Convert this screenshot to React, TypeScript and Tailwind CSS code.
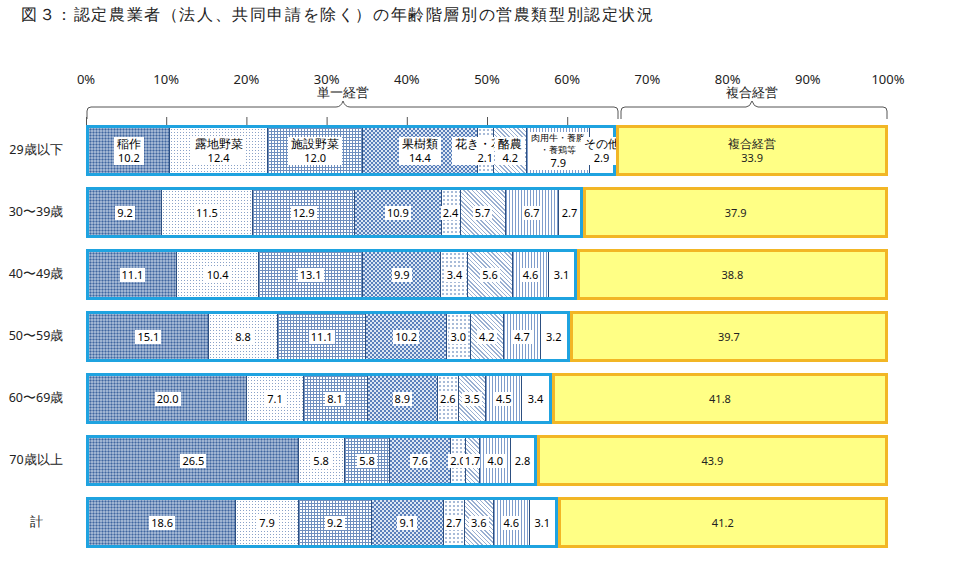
const rows = [
  { label: '29歳以下', v: [10.2, 12.4, 12.0, 14.4, 2.1, 4.2, 7.9, 2.9], c: 33.9 },
  { label: '30〜39歳', v: [9.2, 11.5, 12.9, 10.9, 2.4, 5.7, 6.7, 2.7], c: 37.9 },
  { label: '40〜49歳', v: [11.1, 10.4, 13.1, 9.9, 3.4, 5.6, 4.6, 3.1], c: 38.8 },
  { label: '50〜59歳', v: [15.1, 8.8, 11.1, 10.2, 3.0, 4.2, 4.7, 3.2], c: 39.7 },
  { label: '60〜69歳', v: [20.0, 7.1, 8.1, 8.9, 2.6, 3.5, 4.5, 3.4], c: 41.8 },
  { label: '70歳以上', v: [26.5, 5.8, 5.8, 7.6, 2.0, 1.7, 4.0, 2.8], c: 43.9 },
  { label: '計', v: [18.6, 7.9, 9.2, 9.1, 2.7, 3.6, 4.6, 3.1], c: 41.2 },
]

const names = ['稲作', '露地野菜', '施設野菜', '果樹類', '花き・花木', '酪農', '肉用牛・養豚・養鶏等', 'その他']

const patterns = [
  'bg-[#9fb4d2] bg-[radial-gradient(circle,#3f66a0_0.9px,transparent_1.1px)] bg-[length:3px_3px]',
  'bg-white bg-[radial-gradient(circle,#8aa2c8_0.7px,transparent_0.9px)] bg-[length:3px_3px]',
  'bg-white bg-[linear-gradient(#6f8fbf_1px,transparent_1px),linear-gradient(90deg,#6f8fbf_1px,transparent_1px)] bg-[length:3px_3px]',
  'bg-[#dce6f3] bg-[conic-gradient(#5a80bb_25%,transparent_0_50%,#5a80bb_0_75%,transparent_0)] bg-[length:4px_4px]',
  'bg-white bg-[radial-gradient(circle,#a9bcd8_0.8px,transparent_1px)] bg-[length:4px_4px]',
  'bg-white bg-[repeating-linear-gradient(45deg,#9ab0d2_0_1px,transparent_1px_3px)]',
  'bg-white bg-[repeating-linear-gradient(90deg,#7f9dcc_0_1px,transparent_1px_3px)]',
  'bg-white',
]

function Seg({ w, val, i, first }: { w: number; val: number; i: number; first: boolean }) {
  return (
    <div
      className={`h-full flex items-center justify-center border-r border-[#2d4f80] last:border-r-0 ${patterns[i]}`}
      style={{ width: `${w}%` }}
    >
      {first ? (
        <div className="bg-white px-[3px] text-center leading-[14px] text-[11px] text-black whitespace-nowrap">
          {i === 6 ? (
            <>
              <div className="text-[9px] leading-[12px]">肉用牛・養豚</div>
              <div className="text-[9px] leading-[12px]">・養鶏等</div>
            </>
          ) : (
            <div className="text-[11.5px]">{names[i]}</div>
          )}
          <div>{val.toFixed(1)}</div>
        </div>
      ) : (
        <div className="bg-white px-[2px] text-[11px] leading-[14px] text-black whitespace-nowrap">{val.toFixed(1)}</div>
      )}
    </div>
  )
}

export default function App() {
  return (
    <div className="w-[960px] h-[586px] bg-white font-['Noto_Sans_CJK_JP',sans-serif] text-[#222] relative overflow-hidden">
      <div className="pl-[21px] pt-[3px] text-[15.5px] tracking-[1.6px]">
        図３：認定農業者（法人、共同申請を除く）の年齢階層別の営農類型別認定状況
      </div>

      <div className="flex mt-[44px]">
        <div className="w-[86px]" />
        <div className="w-[802px] relative h-[55px]">
          {[0, 10, 20, 30, 40, 50, 60, 70, 80, 90, 100].map(p => (
            <div
              key={p}
              className="absolute top-0 -translate-x-1/2 text-[13px] font-['Liberation_Sans',sans-serif]"
              style={{ left: `${p}%` }}
            >
              {p}%
            </div>
          ))}
          <svg className="absolute left-0 top-[23px]" width="802" height="32" viewBox="0 0 802 32">
            <path d="M1 26 V18 Q1 14 5 14 H250 Q255 14 257 8 Q259 14 264 14 H528 Q532 14 532 18 V26" fill="none" stroke="#555" strokeWidth="1" />
            <path d="M535 26 V18 Q535 14 539 14 H660 Q664 14 666 8 Q668 14 672 14 H797 Q801 14 801 18 V26" fill="none" stroke="#555" strokeWidth="1" />
            {[0, 80.2, 160.4, 240.6, 320.8, 401, 481.2].map(x => (
              <line key={x} x1={x + 0.5} y1="24" x2={x + 0.5} y2="32" stroke="#555" />
            ))}
          </svg>
          <div className="absolute left-[257px] -translate-x-1/2 top-[15px] text-[12.5px] leading-[16px]">単一経営</div>
          <div className="absolute left-[666px] -translate-x-1/2 top-[15px] text-[12.5px] leading-[16px]">複合経営</div>
        </div>
      </div>

      <div className="flex flex-col gap-[11px]">
        {rows.map((r, ri) => {
          const single = r.v.reduce((a, b) => a + b, 0)
          return (
            <div key={r.label} className="flex items-center h-[51px]">
              <div className="w-[86px] pr-[14px] text-center text-[12.5px]">{r.label}</div>
              <div className="w-[802px] h-full flex">
                <div
                  className="h-full flex border-[3px] border-[#1fa3e0] bg-white"
                  style={{ width: `${single}%` }}
                >
                  {r.v.map((w, i) => (
                    <Seg key={i} w={(w / single) * 100} val={w} i={i} first={ri === 0} />
                  ))}
                </div>
                <div
                  className="h-full flex flex-col items-center justify-center border-[3px] border-[#f2b625] bg-[#ffff85]"
                  style={{ width: `${100 - single}%` }}
                >
                  {ri === 0 && <div className="text-[11.5px] leading-[14px]">複合経営</div>}
                  <div className="text-[11px] leading-[14px]">{r.c.toFixed(1)}</div>
                </div>
              </div>
            </div>
          )
        })}
      </div>
    </div>
  )
}
